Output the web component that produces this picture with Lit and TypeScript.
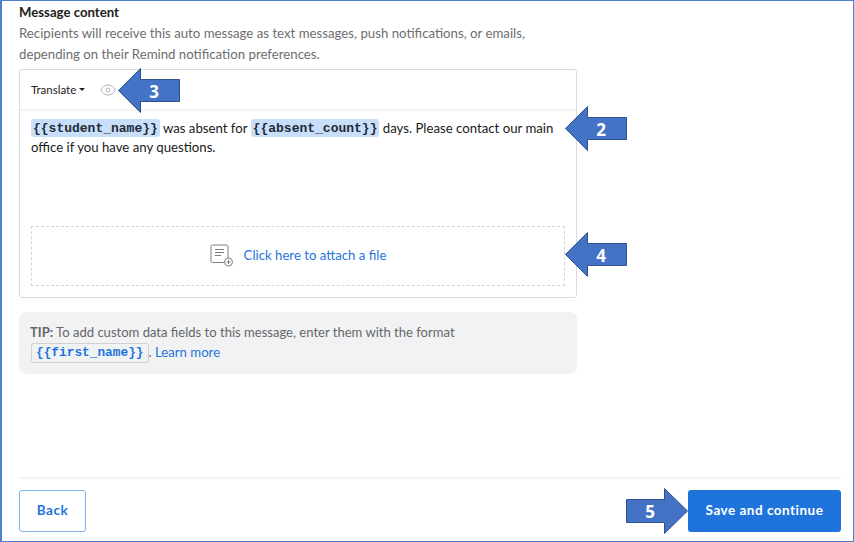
import { LitElement, html, css, svg } from "lit";
import { customElement } from "lit/decorators.js";

const arrows = [
  { n: "3", x: 118, y: 68, flip: false },
  { n: "2", x: 565, y: 106, flip: false },
  { n: "4", x: 565, y: 232, flip: false },
  { n: "5", x: 626, y: 488, flip: true },
];

@customElement("app-root")
export class AppRoot extends LitElement {
  static styles = css`
    :host {
      display: block;
      width: 854px;
      height: 542px;
      position: relative;
      overflow: hidden;
      background: #fff;
      font-family: "Lato", "Open Sans", sans-serif;
    }
    * { box-sizing: border-box; }
    .frame {
      width: 854px;
      height: 542px;
      border: 1px solid #4f7fd1;
      border-left-width: 2px;
      padding: 3px 12px 9px 17px;
      display: flex;
      flex-direction: column;
    }
    .title {
      font-size: 13.2px;
      font-weight: 700;
      line-height: 17px;
      color: #1c1c1c;
    }
    .desc {
      margin-top: 2px;
      width: 540px;
      font-size: 13.23px;
      line-height: 21px;
      color: #6d6e70;
    }
    .editor {
      margin-top: 4px;
      width: 558px;
      height: 229px;
      border: 1.5px solid #d9dadb;
      border-radius: 3px;
      display: flex;
      flex-direction: column;
    }
    .toolbar {
      height: 41px;
      flex: none;
      border-bottom: 2px solid #f3f3f4;
      padding: 0 11px;
      display: flex;
      align-items: center;
      gap: 15px;
    }
    .translate {
      font-size: 11.5px;
      color: #222;
      display: flex;
      align-items: center;
      gap: 3px;
    }
    .caret {
      width: 0;
      height: 0;
      border-left: 3.5px solid transparent;
      border-right: 3.5px solid transparent;
      border-top: 3.5px solid #222;
    }
    .body {
      padding: 8px 11px 0;
      font-size: 13.2px;
      line-height: 19px;
      color: #1a1a1a;
      height: 115px;
      flex: none;
    }
    .line {
      height: 19px;
      white-space: nowrap;
    }
    code {
      font-family: "Liberation Mono", monospace;
      font-weight: 700;
      font-size: 13px;
    }
    .chip {
      display: inline-block;
      height: 18px;
      line-height: 19px;
      vertical-align: top;
      background: #c9def8;
      border-radius: 3px;
      padding: 0 2px;
      color: #1d2a3a;
    }
    .drop {
      margin: 0 11px;
      height: 60px;
      border: 1.5px dashed #d4d5d6;
      display: flex;
      align-items: center;
      justify-content: center;
      gap: 10px;
      padding-bottom: 2px;
    }
    .link { color: #1f74dc; font-size: 13.2px; }
    .tip {
      margin-top: 14px;
      width: 558px;
      height: 62px;
      background: #f1f2f3;
      border-radius: 7px;
      padding: 10px 11px;
      font-size: 13.05px;
      line-height: 20px;
      color: #66676a;
    }
    .tip b { font-weight: 700; }
    .tag {
      display: inline-block;
      margin: 1px 0 0 1px;
      line-height: 18px;
      padding: 0 4px;
      height: 20px;
      border: 1px solid #cfd1d3;
      border-radius: 3px;
      color: #1f74dc;
      font-size: 12.8px;
      vertical-align: top;
    }
    .spacer { flex: 1; }
    .footer {
      border-top: 2px solid #f3f3f4;
      padding-top: 11px;
      display: flex;
      justify-content: space-between;
    }
    button {
      height: 42px;
      border-radius: 3px;
      font-family: inherit;
      font-size: 13.5px;
      font-weight: 700;
      letter-spacing: 0.5px;
      padding: 0 0 2px;
    }
    .back {
      width: 67px;
      background: #fff;
      border: 1px solid #7fb0f0;
      color: #1f74dc;
    }
    .save {
      width: 153px;
      background: #1f74dc;
      border: none;
      color: #fff;
    }
    .arrow {
      position: absolute;
      width: 62px;
      height: 46px;
    }
    .arrow svg { display: block; }
    .num {
      position: absolute;
      top: 0;
      height: 46px;
      width: 40px;
      display: flex;
      align-items: center;
      justify-content: center;
      color: #fff;
      font-family: "Open Sans", sans-serif;
      font-weight: 700;
      font-size: 17px;
    }
  `;

  private arrow(a: { n: string; x: number; y: number; flip: boolean }) {
    const pts = a.flip
      ? "0.5,11.5 38.5,11.5 38.5,0.5 61.5,23 38.5,45.5 38.5,34.5 0.5,34.5"
      : "0.5,22.5 22.5,0.5 22.5,11.5 61.5,11.5 61.5,33.5 22.5,33.5 22.5,44.5";
    return html`<div class="arrow" style="left:${a.x}px;top:${a.y}px">
      <svg width="62" height="46" viewBox="0 0 62 46">
        ${svg`<polygon points=${pts} fill="#4472c4" stroke="#2f528f" stroke-width="1"></polygon>`}
      </svg>
      <div class="num" style="left:${a.flip ? 4 : 16}px">${a.n}</div>
    </div>`;
  }

  render() {
    return html`
      <div class="frame">
        <div class="title">Message content</div>
        <div class="desc">Recipients will receive this auto message as text messages, push notifications, or emails, depending on their Remind notification preferences.</div>
        <div class="editor">
          <div class="toolbar">
            <span class="translate">Translate <span class="caret"></span></span>
            <svg width="16" height="12" viewBox="0 0 16 12" fill="none" stroke="#b4b5b7" stroke-width="1">
              <path d="M0.7 6C2.6 2.6 5 1 8 1s5.4 1.6 7.3 5C13.4 9.4 11 11 8 11S2.6 9.4 0.7 6z"></path>
              <circle cx="8" cy="6" r="2"></circle>
            </svg>
          </div>
          <div class="body">
            <div class="line"><code class="chip">{{student_name}}</code> was absent for <code class="chip">{{absent_count}}</code> days. Please contact our main</div>
            <div class="line">office if you have any questions.</div>
          </div>
          <div class="drop">
            <svg width="24" height="23" viewBox="0 0 24 23" fill="none" stroke="#7d7e80" stroke-width="1">
              <path d="M14 18.5H2.5a1.5 1.5 0 0 1-1.5-1.5V2.5A1.5 1.5 0 0 1 2.5 1h14A1.5 1.5 0 0 1 18 2.5V14"></path>
              <path d="M5 5.5h9M5 8.5h9M5 11.5h6"></path>
              <circle cx="18.5" cy="18" r="4"></circle>
              <path d="M18.5 16v4M16.5 18h4"></path>
            </svg>
            <span class="link">Click here to attach a file</span>
          </div>
        </div>
        <div class="tip">
          <b>TIP:</b> To add custom data fields to this message, enter them with the format<br />
          <code class="tag">{{first_name}}</code>. <span class="link">Learn more</span>
        </div>
        <div class="spacer"></div>
        <div class="footer">
          <button class="back">Back</button>
          <button class="save">Save and continue</button>
        </div>
      </div>
      ${arrows.map((a) => this.arrow(a))}
    `;
  }
}
